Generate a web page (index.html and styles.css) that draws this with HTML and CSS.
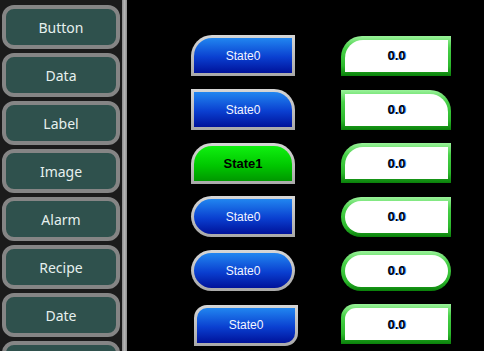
FILE: index.html
```html
<!DOCTYPE html>
<html lang="en">
<head>
  <meta charset="UTF-8">
  <title>Button States</title>
  <link rel="stylesheet" href="styles.css">
</head>
<body>
  <div class="screen">
    <nav class="sidebar">
      <div class="nav-btn">Button</div>
      <div class="nav-btn">Data</div>
      <div class="nav-btn">Label</div>
      <div class="nav-btn">Image</div>
      <div class="nav-btn">Alarm</div>
      <div class="nav-btn">Recipe</div>
      <div class="nav-btn">Date</div>
      <div class="nav-btn"></div>
    </nav>
    <div class="divider"></div>

    <main class="stage">
      <div class="row">
        <div class="state-btn tl"><span class="face">State0</span></div>
        <div class="display tl"><span class="value">0.0</span></div>
      </div>
      <div class="row">
        <div class="state-btn tr"><span class="face">State0</span></div>
        <div class="display tr"><span class="value">0.0</span></div>
      </div>
      <div class="row">
        <div class="state-btn top on"><span class="face">State1</span></div>
        <div class="display tl"><span class="value">0.0</span></div>
      </div>
      <div class="row">
        <div class="state-btn left"><span class="face">State0</span></div>
        <div class="display left"><span class="value">0.0</span></div>
      </div>
      <div class="row">
        <div class="state-btn pill"><span class="face">State0</span></div>
        <div class="display pill"><span class="value">0.0</span></div>
      </div>
      <div class="row last">
        <div class="state-btn diag"><span class="face">State0</span></div>
        <div class="display small-tl"><span class="value">0.0</span></div>
      </div>
    </main>
  </div>
</body>
</html>
```

FILE: styles.css
```css
* {
  margin: 0;
  padding: 0;
  box-sizing: border-box;
}

body {
  background: #000;
  width: 484px;
  height: 351px;
  overflow: hidden;
}

.screen {
  display: flex;
  height: 351px;
}

/* Left menu */
.sidebar {
  width: 122px;
  background: #1b1b1b;
  padding: 5px 2px 0 2px;
  display: flex;
  flex-direction: column;
  gap: 4px;
  overflow: hidden;
}

.nav-btn {
  flex: none;
  height: 44px;
  border: 4px solid #858585;
  border-radius: 12px;
  background: #2f514d;
  color: #e6f0ee;
  font-family: "Noto Sans", sans-serif;
  font-size: 14px;
  display: flex;
  align-items: center;
  justify-content: center;
  padding-top: 1px;
}

.divider {
  width: 5px;
  background: linear-gradient(90deg, #8a8a8a, #b4b4b4 50%, #8e8e8e);
}

/* Demo area */
.stage {
  flex: 1;
  padding: 29px 0 0 64px;
  display: flex;
  flex-direction: column;
}

.row {
  height: 54px;
  display: flex;
  align-items: center;
  gap: 46px;
}

/* State buttons */
.state-btn {
  width: 104px;
  height: 41px;
  padding: 3px;
  background: linear-gradient(180deg, #d6d6d6, #a9a9a9);
}

.state-btn .face {
  display: flex;
  width: 100%;
  height: 100%;
  align-items: center;
  justify-content: center;
  background: linear-gradient(180deg, #2186f0, #0a3fd0 55%, #00129a);
  color: #f2f6ff;
  font-family: "Liberation Sans", sans-serif;
  font-size: 12px;
}

.state-btn.on .face {
  background: linear-gradient(180deg, #10f010, #00c800 55%, #009800);
  color: #000;
  font-weight: bold;
  font-size: 13px;
}

.row.last .state-btn {
  margin-left: 3px;
  margin-right: -3px;
  margin-top: 2px;
}

/* Numeric displays */
.display {
  width: 110px;
  height: 40px;
  padding: 4px 3px 4px 4px;
  background: linear-gradient(180deg, #9af29a, #48d048 30%, #2cb82c 75%, #0a800a);
}

.display .value {
  display: flex;
  width: 100%;
  height: 100%;
  align-items: center;
  justify-content: center;
  background: #fff;
  color: #000;
  font-family: "Liberation Sans", sans-serif;
  font-weight: bold;
  font-size: 13px;
  text-shadow: 1px 0 0 #3a8cff;
}

/* Corner shapes */
.tl { border-top-left-radius: 21px; }
.tl > span { border-top-left-radius: 18px; }

.tr { border-top-right-radius: 21px; }
.tr > span { border-top-right-radius: 18px; }

.top { border-radius: 21px 21px 0 0; }
.top > span { border-radius: 18px 18px 0 0; }

.left { border-radius: 21px 0 0 21px; }
.left > span { border-radius: 18px 0 0 18px; }

.pill { border-radius: 21px; }
.pill > span { border-radius: 18px; }

.diag { border-radius: 13px 0 13px 0; }
.diag > span { border-radius: 10px 0 10px 0; }

.small-tl { border-top-left-radius: 14px; }
.small-tl > span { border-top-left-radius: 11px; }
```
